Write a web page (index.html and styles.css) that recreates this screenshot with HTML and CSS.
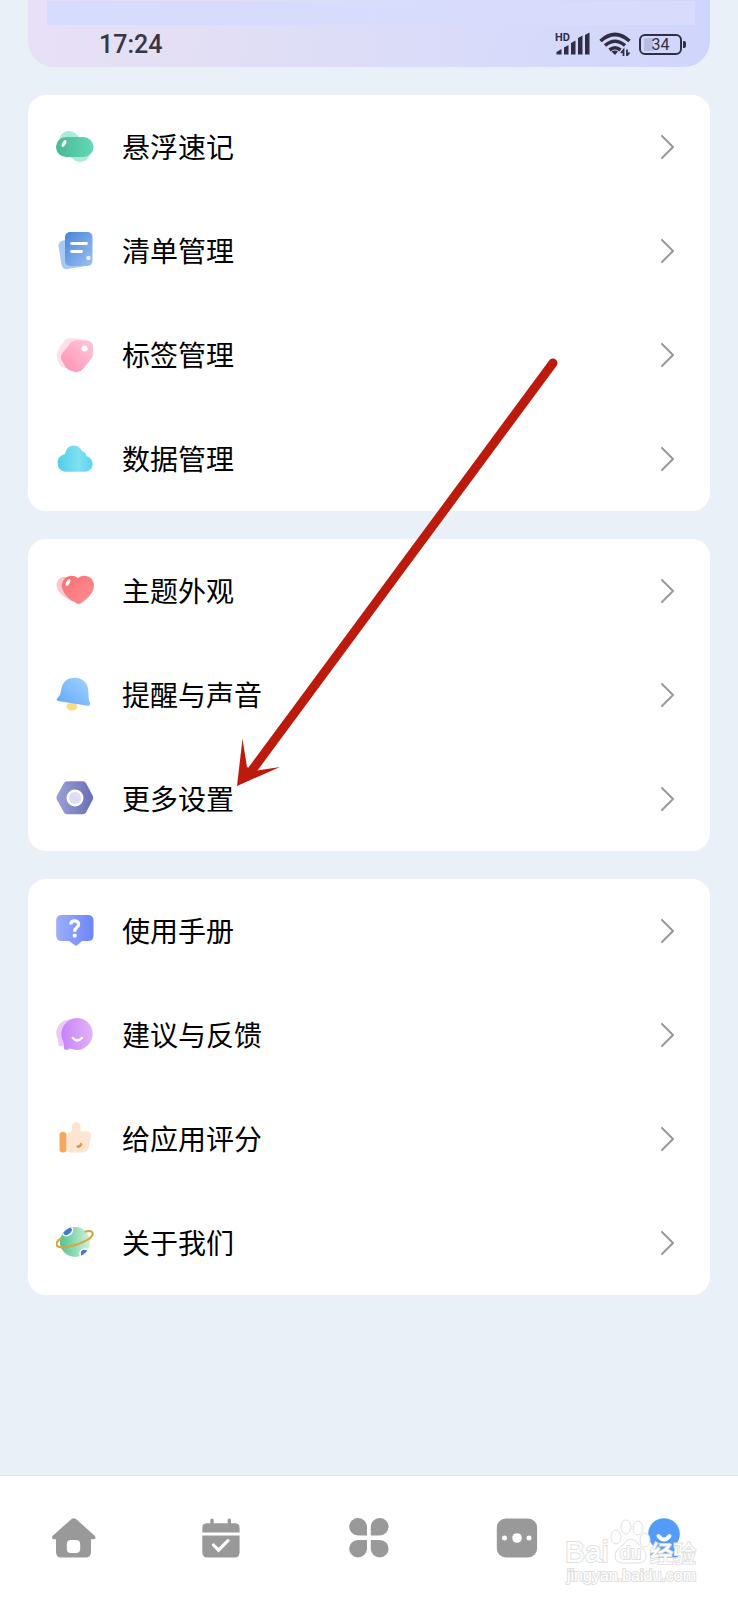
FILE: index.html
```
<!DOCTYPE html>
<html lang="zh-cn">
<head>
  <meta charset="utf-8">
  <meta name="viewport" content="width=device-width, initial-scale=1.0">
  <title>我的</title>
  <link rel="stylesheet" href="styles.css">
</head>
<body>
  <header class="header">
    <div class="header-strip"></div>
    <div class="status">
      <span class="time">17:24</span>
      <div class="status-icons">
        <svg class="signal" viewBox="0 0 36 24" width="36" height="24">
          <text x="0" y="9" class="hd">HD</text>
          <path d="M1.500 22.500v-2.500l5-3v5.500zM9 22.500v-7l4.500-2.500v9.500zM16 22.500V11l4.500-2.500v14zM23 22.500V6l4.500-2.500v19zM30 22.500V3l4.500-2.500v22z" fill="#2f2f44"/>
        </svg>
        <svg class="wifi" viewBox="0 0 32 24" width="32" height="24" fill="none" stroke="#2f2f44" stroke-width="3.600">
          <path d="M1.500 9Q16-4 30.500 9M6 13.500q10-8.500 20 0M10.500 18q5.500-4.500 11 0"/>
          <path d="M12.500 19.500q3.500-2 6.500 0L16 23z" fill="#2f2f44" stroke="none"/>
          <path d="M24.500 24v-6l-2.500 3M28 17.500v6l2.500-3" stroke-width="1.800"/>
        </svg>
        <span class="battery">34</span>
      </div>
    </div>
  </header>

  <main class="main">
    <ul class="card">
      <li><a class="row" href="#">
        <svg class="icon" viewBox="0 0 38 38">
          <defs><linearGradient id="g1"><stop offset="0" stop-color="#48b891"/><stop offset="1" stop-color="#63d8b7"/></linearGradient></defs>
          <path d="M13 13l11 11" stroke="#a6ecd6" stroke-width="20" stroke-linecap="round"/>
          <rect x="0" y="9" width="37.500" height="20" rx="10" fill="url(#g1)"/>
          <ellipse cx="8" cy="15.500" rx="1.800" ry="3.800" fill="#fff" transform="rotate(28 8 15.500)"/>
        </svg>
        <span class="label">悬浮速记</span>
        <svg class="arrow" viewBox="0 0 14 26"><path d="M1 2l11 11L1 24"/></svg>
      </a></li>
      <li><a class="row" href="#">
        <svg class="icon" viewBox="0 0 38 38">
          <defs><linearGradient id="g2" x2="1" y2="1"><stop offset="0" stop-color="#4586d8"/><stop offset="1" stop-color="#9cc0f2"/></linearGradient></defs>
          <rect x="4" y="7" width="26" height="29" rx="5" fill="#a9c8f4" transform="rotate(-9 17 22)"/>
          <rect x="9" y="0" width="27.500" height="34" rx="5" fill="url(#g2)"/>
          <path d="M15.500 11.500h15M15.500 19.500h10" stroke="#fff" stroke-width="2.800" stroke-linecap="round"/>
          <circle cx="32.500" cy="26" r="2.200" fill="#e8f2ff"/>
        </svg>
        <span class="label">清单管理</span>
        <svg class="arrow" viewBox="0 0 14 26"><path d="M1 2l11 11L1 24"/></svg>
      </a></li>
      <li><a class="row" href="#">
        <svg class="icon" viewBox="0 0 38 38">
          <defs><linearGradient id="g3" x1="0" y1="1" x2="1" y2="0"><stop offset="0" stop-color="#ff8fb4"/><stop offset="1" stop-color="#ffc9da"/></linearGradient></defs>
          <path d="M8 5Q11 1.500 17 2l8 1 4 12-14 18-6-1Q4 31 3 28L1 22Q0 19 1.500 15z" fill="#fde0e9"/>
          <path d="M15 6.500Q18 4 22 4l9 .5q5.500.5 6 5l.3 7q0 4-2.500 7L27 33q-3.500 4-8 3l-5-1.500q-3-1-4.500-4L5.500 24q-1.500-4 1-7z" fill="url(#g3)"/>
          <circle cx="28.500" cy="12.500" r="3" fill="#fff"/>
        </svg>
        <span class="label">标签管理</span>
        <svg class="arrow" viewBox="0 0 14 26"><path d="M1 2l11 11L1 24"/></svg>
      </a></li>
      <li><a class="row" href="#">
        <svg class="icon" viewBox="0 0 38 38">
          <defs><linearGradient id="g4"><stop offset="0" stop-color="#51cfe8"/><stop offset=".6" stop-color="#7fe0f3"/><stop offset="1" stop-color="#5cd5ee"/></linearGradient></defs>
          <path d="M9 31.800A9 9 0 0 1 7.500 14.500Q9 14.500 9.500 12.500A8.500 8.500 0 0 1 25 9.500q.8 1.500 2 2 3.500 1.500 3.200 4.500A8 8 0 0 1 29.500 31.800z" fill="url(#g4)"/>
        </svg>
        <span class="label">数据管理</span>
        <svg class="arrow" viewBox="0 0 14 26"><path d="M1 2l11 11L1 24"/></svg>
      </a></li>
    </ul>

    <ul class="card">
      <li><a class="row" href="#">
        <svg class="icon" viewBox="0 0 38 38">
          <defs><linearGradient id="g5" x2="1" y2="1"><stop offset="0" stop-color="#fc6d72"/><stop offset="1" stop-color="#fb9296"/></linearGradient></defs>
          <path d="M16 29.500C8 25 .5 20 .5 13 .5 6 8 2.500 14 6l10 6-4 14q-2 4-4 3.500z" fill="#ffc6c9"/>
          <path d="M22.500 32q-1.500 0-3-1.200C11 26 6 20 6 13.500 6 5 15.500 1 22 6 28.500 1 38 5 38 13.500c0 6.500-5.500 12.500-12.500 17.300Q24 32 22.500 32z" fill="url(#g5)"/>
          <ellipse cx="12" cy="10.500" rx="1.800" ry="3.600" fill="#fff" transform="rotate(28 12 10.500)"/>
        </svg>
        <span class="label">主题外观</span>
        <svg class="arrow" viewBox="0 0 14 26"><path d="M1 2l11 11L1 24"/></svg>
      </a></li>
      <li><a class="row" href="#">
        <svg class="icon" viewBox="0 0 38 38">
          <defs><linearGradient id="g6" x1="1" x2="0" y2="1"><stop offset="0" stop-color="#a6d4ff"/><stop offset="1" stop-color="#5ea7fb"/></linearGradient></defs>
          <ellipse cx="16" cy="30.500" rx="5.500" ry="4" fill="#f9dc83"/>
          <path d="M2 25Q-.5 24 1.500 22 4.500 19.500 5 15 6.500 1.800 19 1.800 31.500 2.500 32.300 15l.5 8q.2 2 1.200 3.500.8 3.500-2.500 3.200z" fill="url(#g6)"/>
        </svg>
        <span class="label">提醒与声音</span>
        <svg class="arrow" viewBox="0 0 14 26"><path d="M1 2l11 11L1 24"/></svg>
      </a></li>
      <li><a class="row" href="#">
        <svg class="icon" viewBox="0 0 38 38">
          <defs><linearGradient id="g7"><stop offset="0" stop-color="#9b9fd6"/><stop offset="1" stop-color="#686fb4"/></linearGradient></defs>
          <path d="M11 1.200h16q2 0 3 1.700l6.800 13q.8 1.800 0 3.600L30 32.600q-1 1.700-3 1.700H11q-2 0-3-1.700L.8 19.500q-.8-1.800 0-3.600L8 2.900q1-1.700 3-1.700z" fill="url(#g7)"/>
          <circle cx="19" cy="18" r="8.500" fill="#fff"/>
          <circle cx="19" cy="18" r="6" fill="#dcdcf6"/>
        </svg>
        <span class="label">更多设置</span>
        <svg class="arrow" viewBox="0 0 14 26"><path d="M1 2l11 11L1 24"/></svg>
      </a></li>
    </ul>

    <ul class="card">
      <li><a class="row" href="#">
        <svg class="icon" viewBox="0 0 38 38">
          <defs><linearGradient id="g8"><stop offset="0" stop-color="#9caef9"/><stop offset="1" stop-color="#6d86fa"/></linearGradient></defs>
          <path d="M6 3h26q5.500 0 5.500 5.500v15Q37.500 29 32 29h-6l-4.500 4q-1.500 1.200-3 0L13 29H6Q.2 29 .2 23.500v-15Q.2 3 6 3z" fill="url(#g8)"/>
          <path d="M14.800 12.500q0-3.700 4-3.700 3.800.2 3.800 3.500 0 2-2.200 3.500-1.700 1-1.700 4" fill="none" stroke="#fff" stroke-width="3.200"/>
          <circle cx="18.700" cy="23.700" r="2.100" fill="#fff"/>
        </svg>
        <span class="label">使用手册</span>
        <svg class="arrow" viewBox="0 0 14 26"><path d="M1 2l11 11L1 24"/></svg>
      </a></li>
      <li><a class="row" href="#">
        <svg class="icon" viewBox="0 0 38 38">
          <defs><linearGradient id="g9"><stop offset="0" stop-color="#c683f5"/><stop offset="1" stop-color="#e2b4fa"/></linearGradient></defs>
          <path d="M16 3Q2 4 .3 16q-.3 4 1.700 8l.5 5q1 2.500 4 1L18 31z" fill="#ecc9fb"/>
          <path d="M21.500 2A16 16 0 1 1 14 32.500q-2 2-5 1-2-1-.8-3.500 0-2-1-4.500A16 16 0 0 1 21.500 2z" fill="url(#g9)"/>
          <path d="M16.800 22q4.500 5 9 0" fill="none" stroke="#fff" stroke-width="2.400" stroke-linecap="round"/>
        </svg>
        <span class="label">建议与反馈</span>
        <svg class="arrow" viewBox="0 0 14 26"><path d="M1 2l11 11L1 24"/></svg>
      </a></li>
      <li><a class="row" href="#">
        <svg class="icon" viewBox="0 0 38 38">
          <rect x="3.500" y="12" width="7" height="20.500" rx="3" fill="#f6a75d"/>
          <path d="M11.500 14l3.500-3q1-1 1-3V6.500q.2-4.200 4.200-4.200t4.300 4.200v5h6q5 0 4.500 4.500l-2 11q-1 5.500-6 5.500H15q-3.500 0-3.500-3.500z" fill="#fee5d1"/>
          <path d="M20.800 26q3.500 0 4-3 1.500.5 1 2-1.500 3-4.500 2.500z" fill="#e6963f" stroke="#e6963f"/>
        </svg>
        <span class="label">给应用评分</span>
        <svg class="arrow" viewBox="0 0 14 26"><path d="M1 2l11 11L1 24"/></svg>
      </a></li>
      <li><a class="row" href="#">
        <svg class="icon" viewBox="0 0 38 38">
          <defs>
            <linearGradient id="g10"><stop offset="0" stop-color="#4fc491"/><stop offset="1" stop-color="#d3f2da"/></linearGradient>
            <clipPath id="globe"><circle cx="19" cy="18" r="15"/></clipPath>
          </defs>
          <circle cx="19" cy="18" r="15" fill="url(#g10)"/>
          <g clip-path="url(#globe)" fill="#4478c8" stroke="#fff" stroke-width="1.600">
            <ellipse cx="11.500" cy="7" rx="5.500" ry="4.200" transform="rotate(-40 11.500 7)"/>
            <circle cx="28.500" cy="29.500" r="4.500"/>
          </g>
          <path d="M5 14.500Q-1 18.500.8 21.500 4 25.500 19 21 36.500 15.500 36.800 9.500 36.500 6 29.500 7.500" fill="none" stroke="#dca43a" stroke-width="2.200" stroke-linecap="round"/>
        </svg>
        <span class="label">关于我们</span>
        <svg class="arrow" viewBox="0 0 14 26"><path d="M1 2l11 11L1 24"/></svg>
      </a></li>
    </ul>

    <!-- 指向“更多设置” -->
    <svg class="pointer" viewBox="0 0 330 440" width="330" height="440">
      <path d="M323 13L20 423" stroke="#bb1a0d" stroke-width="9" stroke-linecap="round"/>
      <path d="M7 436l5.500-47 4.500 28 7 4 26-4z" fill="#bb1a0d"/>
    </svg>
  </main>

  <nav class="tabbar">
    <a href="#" aria-label="首页"><svg viewBox="0 0 44 40" width="44" height="40">
      <path fill-rule="evenodd" d="M19.500 1q2.200-1.500 4.500 0L43 18q1.500 3-1.500 3.300H39V34q0 5.500-5.500 5.500h-24Q4 39.500 4 34V21.300H2Q-1 21 .5 18zM19 22q-4.200 0-4.200 4.200v4.600q0 4.200 4.200 4.200h5q4.200 0 4.200-4.200v-4.600Q28.200 22 24 22z"/>
    </svg></a>
    <a href="#" aria-label="日程"><svg viewBox="0 0 44 40" width="44" height="40">
      <path d="M3.300 14.500V10q0-4.800 4.700-4.800h3.300V2q0-1.500 1.700-1.500T14.700 2v3.200h13.900V2q0-1.500 1.700-1.500T32 2v3.200h4q4.600 0 4.600 4.800v4.500zM3.300 17.500h37.300V34q0 5.500-5 5.500H8.300q-5 0-5-5.500z"/>
      <path d="M14.500 27l5 5.200 9.500-9.500" fill="none" stroke="#fff" stroke-width="3.200" stroke-linecap="round"/>
    </svg></a>
    <a href="#" aria-label="分类"><svg viewBox="0 0 44 40" width="44" height="40">
      <path d="M20 17.500h-9A8.900 8.700 0 1 1 20 9zM23.800 17.500V9a8.900 8.700 0 1 1 9 8.500zM20 22v9a8.900 8.700 0 1 1-9-9zM23.800 22h9a8.900 8.700 0 1 1-9 9z"/>
    </svg></a>
    <a href="#" aria-label="更多"><svg viewBox="0 0 44 40" width="44" height="40">
      <rect x="1.800" y=".5" width="40.300" height="39" rx="9"/>
      <g fill="#fff"><circle cx="9.500" cy="20" r="2.500"/><circle cx="22" cy="20" r="4.800"/><circle cx="34" cy="20" r="2.500"/></g>
    </svg></a>
    <a href="#" aria-label="我的" class="active"><svg viewBox="0 0 44 40" width="44" height="40">
      <circle cx="22" cy="16" r="15.800"/>
      <path d="M8 39.500q0-10 7-11h14q7 1 7 11z"/>
      <path d="M16.500 18q5.500 7 11 0" fill="none" stroke="#fff" stroke-width="4" stroke-linecap="round"/>
    </svg></a>
    <svg class="watermark" viewBox="0 0 140 72" width="140" height="72">
      <g class="paw">
        <ellipse cx="54" cy="23" rx="5" ry="7"/>
        <ellipse cx="64" cy="13" rx="5" ry="7"/>
        <ellipse cx="76" cy="14" rx="5" ry="7"/>
        <ellipse cx="83" cy="26" rx="5" ry="7"/>
        <path d="M69 25q5 0 8 6 7 5 7 11 0 7-8 7H61q-8 0-8-7 0-6 8-11 3-6 8-6z"/>
      </g>
      <text x="3" y="48" class="wm-big">Bai</text>
      <text x="58" y="45" class="wm-du">du</text>
      <text x="88" y="48" class="wm-cn">经验</text>
      <text x="5" y="67" class="wm-small">jingyan.baidu.com</text>
    </svg>
  </nav>
</body>
</html>
```
FILE: styles.css
```
:root {
  --bg: #eaf0f7;
  --gray: #999;
  --blue: #539df8;
  --dark: #2f2f44;
}
* {
  box-sizing: border-box;
}
body {
  margin: 0;
  min-height: 100vh;
  display: flex;
  flex-direction: column;
  background-color: var(--bg);
  font-family: Roboto, "Noto Sans CJK SC", sans-serif;
  color: #000;
}
a {
  color: inherit;
  text-decoration: none;
}

/* 顶部状态栏 */
.header {
  margin: 0 28px;
  padding-top: 1px;
  border-radius: 0 0 26px 26px;
  background: linear-gradient(100deg, #e8e0f6 0%, #e4dff4 20%, #dfdef6 38%, #d9dbfa 65%, #cfd5fb 100%);
}
.header-strip {
  height: 24px;
  margin: 0 15px 0 19px;
  background: linear-gradient(90deg, #d6dcfd, #d9dbfc);
}
.status {
  display: flex;
  justify-content: space-between;
  align-items: center;
  height: 42px;
  padding: 0 24px 4px 71px;
}
.time {
  font-size: 25px;
  font-weight: 500;
  color: #3a3546;
}
.status-icons {
  display: flex;
  align-items: center;
  gap: 8px;
}
.hd {
  font-size: 11px;
  font-weight: 700;
  fill: var(--dark);
}
.battery {
  position: relative;
  width: 43px;
  height: 21px;
  margin-right: 4px;
  border: 2px solid var(--dark);
  border-radius: 6px;
  text-align: center;
  font-size: 16px;
  line-height: 17px;
  color: var(--dark);
  background: linear-gradient(#b7bce2, #b7bce2) 3px 2px / 9px 13px no-repeat;
}
.battery::after {
  content: "";
  position: absolute;
  top: 5px;
  right: -6px;
  width: 3px;
  height: 7px;
  border-radius: 0 2px 2px 0;
  background-color: var(--dark);
}

/* 设置列表 */
.main {
  position: relative;
  flex: 1;
  display: flex;
  flex-direction: column;
  gap: 28px;
  padding: 28px;
}
.card {
  list-style: none;
  margin: 0;
  padding: 0;
  border-radius: 18px;
  background-color: #fff;
}
.row {
  display: flex;
  align-items: center;
  height: 104px;
  padding: 0 35px 0 28px;
}
.icon {
  width: 38px;
  height: 38px;
}
.label {
  flex: 1;
  margin-left: 28px;
  padding-top: 4px;
  font-size: 28px;
  line-height: 40px;
}
.arrow {
  width: 14px;
  height: 26px;
  fill: none;
  stroke: var(--gray);
  stroke-width: 2;
  stroke-linecap: round;
  stroke-linejoin: round;
}
.pointer {
  position: absolute;
  top: 283px;
  left: 230px;
  pointer-events: none;
}

/* 底部导航 */
.tabbar {
  position: relative;
  display: grid;
  grid-template-columns: repeat(5, 1fr);
  height: 125px;
  border-top: 1px solid #e2e6ea;
  background-color: #fff;
}
.tabbar a {
  display: flex;
  justify-content: center;
  align-items: center;
  fill: var(--gray);
}
.tabbar .active {
  fill: var(--blue);
}
.watermark {
  position: absolute;
  right: 36px;
  bottom: 14px;
  pointer-events: none;
  fill: #fff;
  stroke: #e0e0e0;
  stroke-width: 1;
}
.watermark text {
  font-family: "Liberation Sans", "Noto Sans CJK SC", sans-serif;
  paint-order: stroke;
  stroke-width: 2;
}
.watermark .wm-big {
  font-size: 30px;
}
.watermark .wm-du {
  font-size: 19px;
}
.watermark .wm-cn {
  font-size: 23px;
}
.watermark .wm-small {
  font-size: 16px;
}
```
